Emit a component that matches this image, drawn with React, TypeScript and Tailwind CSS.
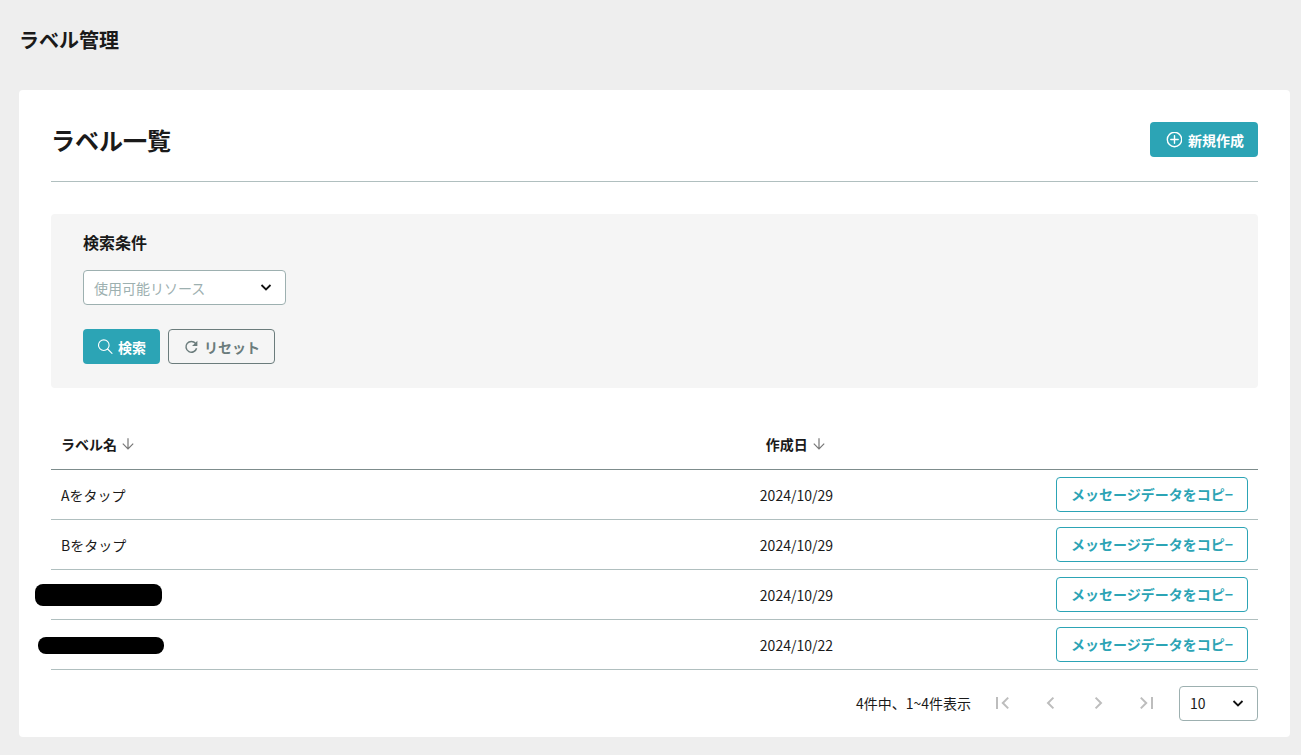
import {useState} from "react"

type Label = {
    id: number;
    name: string;
    createdAt: string;
    mask?: string;
}

const labels: Label[] = [
    {id: 1, name: 'Aをタップ', createdAt: '2024/10/29'},
    {id: 2, name: 'Bをタップ', createdAt: '2024/10/29'},
    {id: 3, name: '', createdAt: '2024/10/29', mask: '-left-4 top-3.5 h-[22px] w-[127px] rounded-lg'},
    {id: 4, name: '', createdAt: '2024/10/22', mask: '-left-[13px] top-[17px] h-[17px] w-[126px] rounded-lg'},
];

function PlusCircleIcon() {
    return (
        <svg className="size-4" viewBox="0 0 16 16" fill="none" stroke="currentColor" strokeWidth="1.4" aria-hidden="true">
            <circle cx="8.5" cy="7.5" r="7.2" />
            <path d="M8.5 3.8v7.4M4.8 7.5h7.4" strokeLinecap="round" />
        </svg>
    )
}

function SearchIcon() {
    return (
        <svg className="size-4" viewBox="0 0 16 16" fill="none" stroke="currentColor" strokeWidth="1.1" aria-hidden="true">
            <circle cx="6.8" cy="6.2" r="5.3" />
            <path d="M10.6 10l4.4 4.4" strokeLinecap="round" />
        </svg>
    )
}

function ResetIcon() {
    return (
        <svg className="size-4" viewBox="0 0 16 16" fill="none" stroke="currentColor" strokeWidth="1.5" aria-hidden="true">
            <path d="M12.6 4.4A5.4 5.4 0 1 0 13.6 9.2" />
            <path d="M14.4 1.8v5.3H9.1z" fill="currentColor" stroke="none" />
        </svg>
    )
}

function SortIcon() {
    return (
        <svg className="size-3 text-[#777]" viewBox="0 0 12 12" fill="none" stroke="currentColor" strokeWidth="1.2" aria-hidden="true">
            <path d="M6 .2v10.5M.8 5.7L6 10.9 11.2 5.7" />
        </svg>
    )
}

function SelectArrow() {
    return (
        <svg className="pointer-events-none absolute right-3.5 top-3 size-3" viewBox="0 0 12 12" fill="none" stroke="#111" strokeWidth="1.8" aria-hidden="true">
            <path d="M1.5 3L6 7.4 10.5 3" />
        </svg>
    )
}

const pageIcons = [
    {label: '最初のページ', d: 'M2 2v12M13.2 2.6L7.8 8l5.4 5.4'},
    {label: '前のページ', d: 'M10.4 2.6L5 8l5.4 5.4'},
    {label: '次のページ', d: 'M4.6 2.6L10 8l-5.4 5.4'},
    {label: '最後のページ', d: 'M1.8 2.6L7.2 8l-5.4 5.4M13 2v12'},
];

export default function LabelPage() {
    const [resource, setResource] = useState<string>('');
    const [pageSize, setPageSize] = useState<string>('10');

    return (
        <div className="min-h-screen bg-[#eee] pb-[18px] pl-[19px] pr-[11px] text-sm text-[#1a1a1a] font-['Noto_Sans_CJK_JP',sans-serif]" lang="ja">
            <header className="flex h-[90px] items-start pt-[26px]">
                <h1 className="text-xl leading-7 font-bold">ラベル管理</h1>
            </header>
            <main className="rounded bg-white px-8 pt-8 pb-4">
                <div className="flex items-center justify-between border-b border-[#b0bfbf] pb-6">
                    <h2 className="text-2xl leading-[35px] font-bold">ラベル一覧</h2>
                    <button className="flex h-[35px] items-center gap-1.5 rounded bg-[#2ca4b5] px-4 pr-3.5 font-bold text-white">
                        <PlusCircleIcon />
                        新規作成
                    </button>
                </div>

                <form className="mt-8 rounded bg-[#f5f5f5] px-8 pt-4 pb-6" onSubmit={(e) => e.preventDefault()}>
                    <h3 className="text-base leading-6 font-bold">検索条件</h3>
                    <div className="relative mt-4 w-[203px]">
                        <select
                            aria-label="使用可能リソース"
                            className="block h-[35px] w-full appearance-none rounded border border-[#9db0b0] bg-white px-2.5 text-[#9db0b0]"
                            value={resource}
                            onChange={(e) => setResource(e.target.value)}
                        >
                            <option value="">使用可能リソース</option>
                        </select>
                        <SelectArrow />
                    </div>
                    <div className="mt-6 flex gap-2">
                        <button type="submit" className="flex h-[35px] items-center gap-[5px] rounded bg-[#2ca4b5] px-3.5 font-bold text-white">
                            <SearchIcon />
                            検索
                        </button>
                        <button type="button" className="flex h-[35px] items-center gap-[5px] rounded border border-[#6b7c7c] px-3.5 font-bold text-[#6b7c7c]" onClick={() => setResource('')}>
                            <ResetIcon />
                            リセット
                        </button>
                    </div>
                </form>

                <table className="mt-8 w-full table-fixed border-collapse text-left">
                    <thead>
                        <tr className="h-[49px] border-b border-[#7d8c8c]">
                            <th className="w-[57.9%] px-2.5">
                                <button className="flex items-center gap-[5px] font-bold">ラベル名 <SortIcon /></button>
                            </th>
                            <th className="px-4">
                                <button className="flex items-center gap-[5px] font-bold">作成日 <SortIcon /></button>
                            </th>
                            <th className="w-[212px]"></th>
                        </tr>
                    </thead>
                    <tbody>
                        {labels.map((label) => (
                            <tr key={label.id} className="h-[50px] border-b border-[#b0bfbf]">
                                <td className="relative px-2.5 pt-0.5">
                                    {label.name}
                                    {label.mask && <span className={"absolute bg-black " + label.mask} />}
                                </td>
                                <td className="px-2.5 pt-0.5">{label.createdAt}</td>
                                <td className="px-2.5">
                                    <button className="block h-[35px] w-full rounded border border-[#2ca4b5] font-bold whitespace-nowrap text-[#2ca4b5]">メッセージデータをコピ−</button>
                                </td>
                            </tr>
                        ))}
                    </tbody>
                </table>

                <div className="mt-4 flex items-center justify-end">
                    <span className="mr-6">4件中、1~4件表示</span>
                    <nav className="mr-6 flex gap-8 text-[#bdbdbd]" aria-label="ページ送り">
                        {pageIcons.map((icon) => (
                            <button key={icon.label} aria-label={icon.label}>
                                <svg className="size-4" viewBox="0 0 16 16" fill="none" stroke="currentColor" strokeWidth="2" aria-hidden="true">
                                    <path d={icon.d} />
                                </svg>
                            </button>
                        ))}
                    </nav>
                    <div className="relative w-[79px]">
                        <select
                            aria-label="表示件数"
                            className="block h-[35px] w-full appearance-none rounded border border-[#9db0b0] bg-white px-2.5"
                            value={pageSize}
                            onChange={(e) => setPageSize(e.target.value)}
                        >
                            <option>10</option>
                            <option>20</option>
                            <option>50</option>
                        </select>
                        <SelectArrow />
                    </div>
                </div>
            </main>
        </div>
    )
}
